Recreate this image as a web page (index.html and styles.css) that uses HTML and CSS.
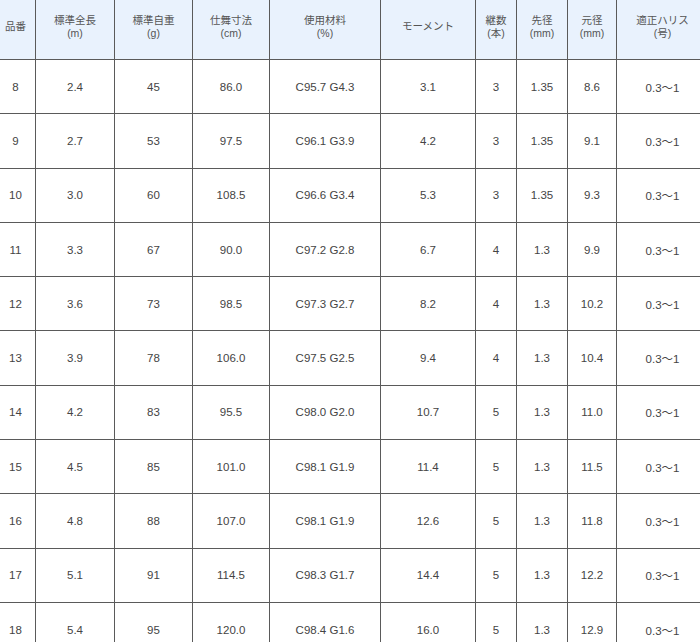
FILE: index.html
```html
<!DOCTYPE html>
<html lang="ja">
<head>
<meta charset="utf-8">
<link rel="stylesheet" href="styles.css">
</head>
<body>
<div class="wrap">
<table class="spec">
<colgroup>
<col class="c1"><col class="c2"><col class="c3"><col class="c4"><col class="c5"><col class="c6"><col class="c7"><col class="c8"><col class="c9"><col class="c10">
</colgroup>
<thead>
<tr>
<th>品番</th>
<th>標準全長<br>(m)</th>
<th>標準自重<br>(g)</th>
<th>仕舞寸法<br>(cm)</th>
<th>使用材料<br>(%)</th>
<th>モーメント</th>
<th>継数<br>(本)</th>
<th>先径<br>(mm)</th>
<th>元径<br>(mm)</th>
<th>適正ハリス<br>(号)</th>
</tr>
</thead>
<tbody>
<tr><td>8</td><td>2.4</td><td>45</td><td>86.0</td><td>C95.7 G4.3</td><td>3.1</td><td>3</td><td>1.35</td><td>8.6</td><td>0.3〜1</td></tr>
<tr><td>9</td><td>2.7</td><td>53</td><td>97.5</td><td>C96.1 G3.9</td><td>4.2</td><td>3</td><td>1.35</td><td>9.1</td><td>0.3〜1</td></tr>
<tr><td>10</td><td>3.0</td><td>60</td><td>108.5</td><td>C96.6 G3.4</td><td>5.3</td><td>3</td><td>1.35</td><td>9.3</td><td>0.3〜1</td></tr>
<tr><td>11</td><td>3.3</td><td>67</td><td>90.0</td><td>C97.2 G2.8</td><td>6.7</td><td>4</td><td>1.3</td><td>9.9</td><td>0.3〜1</td></tr>
<tr><td>12</td><td>3.6</td><td>73</td><td>98.5</td><td>C97.3 G2.7</td><td>8.2</td><td>4</td><td>1.3</td><td>10.2</td><td>0.3〜1</td></tr>
<tr><td>13</td><td>3.9</td><td>78</td><td>106.0</td><td>C97.5 G2.5</td><td>9.4</td><td>4</td><td>1.3</td><td>10.4</td><td>0.3〜1</td></tr>
<tr><td>14</td><td>4.2</td><td>83</td><td>95.5</td><td>C98.0 G2.0</td><td>10.7</td><td>5</td><td>1.3</td><td>11.0</td><td>0.3〜1</td></tr>
<tr><td>15</td><td>4.5</td><td>85</td><td>101.0</td><td>C98.1 G1.9</td><td>11.4</td><td>5</td><td>1.3</td><td>11.5</td><td>0.3〜1</td></tr>
<tr><td>16</td><td>4.8</td><td>88</td><td>107.0</td><td>C98.1 G1.9</td><td>12.6</td><td>5</td><td>1.3</td><td>11.8</td><td>0.3〜1</td></tr>
<tr><td>17</td><td>5.1</td><td>91</td><td>114.5</td><td>C98.3 G1.7</td><td>14.4</td><td>5</td><td>1.3</td><td>12.2</td><td>0.3〜1</td></tr>
<tr><td>18</td><td>5.4</td><td>95</td><td>120.0</td><td>C98.4 G1.6</td><td>16.0</td><td>5</td><td>1.3</td><td>12.9</td><td>0.3〜1</td></tr>
</tbody>
</table>
</div>
</body>
</html>
```

FILE: styles.css
```css
html, body {
  margin: 0;
  padding: 0;
  background: #fff;
}
body {
  width: 700px;
  height: 642px;
  overflow: hidden;
}
.wrap {
  margin: -7px 0 0 -5px;
}
.spec {
  border-collapse: collapse;
  table-layout: fixed;
  width: 713px;
  font-family: "Liberation Sans", "Noto Sans CJK JP", sans-serif;
  color: #444;
}
.c1 { width: 40px; }
.c2 { width: 79px; }
.c3 { width: 78px; }
.c4 { width: 77px; }
.c5 { width: 111px; }
.c6 { width: 95px; }
.c7 { width: 41px; }
.c8 { width: 51px; }
.c9 { width: 49px; }
.c10 { width: 92px; }
.spec th, .spec td {
  border: 1px solid #5a5a5a;
  text-align: center;
  vertical-align: middle;
  padding: 0;
}
.spec th {
  background: #e9f2fd;
  height: 65px;
  font-weight: normal;
  font-size: 10.5px;
  line-height: 13px;
  color: #555;
}
.spec td {
  height: 53.3px;
  font-size: 11.5px;
  color: #444;
}
```
